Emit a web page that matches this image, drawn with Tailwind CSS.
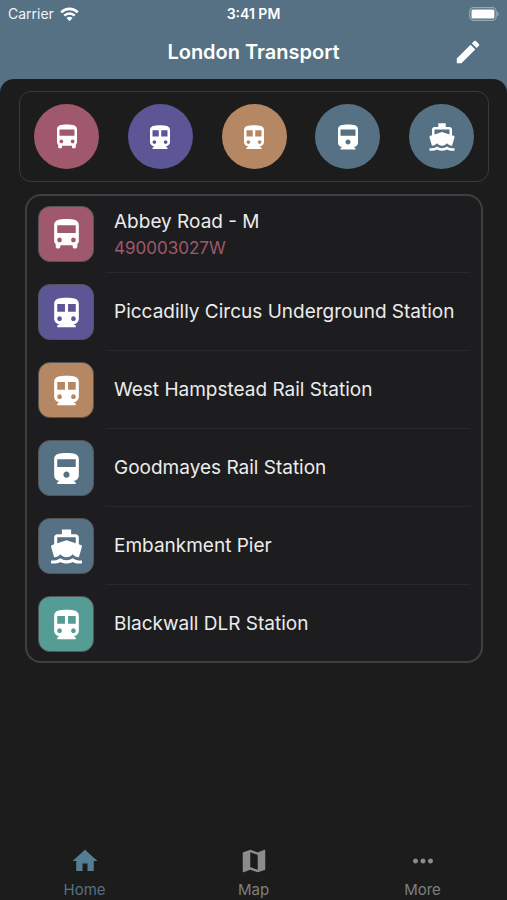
<!DOCTYPE html>
<html lang="en">
<head>
<meta charset="utf-8">
<meta name="viewport" content="width=device-width, initial-scale=1">
<title>London Transport</title>
<script src="https://cdn.jsdelivr.net/npm/@tailwindcss/browser@4"></script>
</head>
<body class="flex min-h-screen flex-col bg-[#557183] font-['Inter','Liberation_Sans',sans-serif] text-white">
<svg class="hidden" aria-hidden="true">
  <symbol id="bus" viewBox="0 0 24 24"><path d="M4 16c0 .88.39 1.67 1 2.22V20c0 .55.45 1 1 1h1c.55 0 1-.45 1-1v-1h8v1c0 .55.45 1 1 1h1c.55 0 1-.45 1-1v-1.78c.61-.55 1-1.34 1-2.22V6c0-3.5-3.58-4-8-4s-8 .5-8 4v10zm3.5 1c-.83 0-1.5-.67-1.5-1.5S6.67 14 7.5 14s1.5.67 1.5 1.5S8.33 17 7.5 17zm9 0c-.83 0-1.5-.67-1.5-1.5s.67-1.5 1.5-1.5 1.5.67 1.5 1.5-.67 1.5-1.5 1.5zm1.5-6H6V6h12v5z"/></symbol>
  <symbol id="subway" viewBox="0 -0.5 24 24"><path d="M12 2c-4.420 0-8 .5-8 4v9.500C4 17.430 5.570 19 7.500 19L6 20v1h12v-1L16.500 19c1.930 0 3.500-1.570 3.500-3.500V6c0-3.500-3.580-4-8-4zM7.500 17c-.83 0-1.500-.67-1.500-1.500S6.670 14 7.500 14s1.500.67 1.500 1.500S8.330 17 7.500 17zm3.500-6H6V6h5v5zm5.500 6c-.83 0-1.500-.67-1.500-1.500s.67-1.500 1.500-1.500 1.500.67 1.500 1.500-.67 1.500-1.500 1.500zm1.500-6h-5V6h5v5z"/></symbol>
  <symbol id="rail" viewBox="0 -1 24 24"><path d="M4 15.500C4 17.430 5.570 19 7.500 19L6 20v1h12v-1L16.500 19c1.930 0 3.500-1.570 3.500-3.500V5c0-3.500-3.580-4-8-4s-8 .5-8 4v10.500zm8 1.500c-1.100 0-2-.9-2-2s.9-2 2-2 2 .9 2 2-.9 2-2 2zm6-7H6V5h12v5z"/></symbol>
  <symbol id="boat" viewBox="0 0 24 24"><path d="M20 21c-1.390 0-2.780-.47-4-1.320-2.440 1.710-5.560 1.710-8 0C6.780 20.530 5.390 21 4 21H2v2h2c1.380 0 2.740-.35 4-.99 2.520 1.290 5.480 1.290 8 0 1.260.65 2.620.99 4 .99h2v-2h-2zM3.950 19H4c1.600 0 3.020-.88 4-2 .98 1.120 2.400 2 4 2s3.020-.88 4-2c.98 1.120 2.400 2 4 2h.05l1.890-6.680c.08-.26.06-.54-.06-.78s-.34-.42-.6-.5L20 10.620V6c0-1.100-.9-2-2-2h-3V1H9v3H6c-1.100 0-2 .9-2 2v4.620l-1.290.42c-.26.08-.48.26-.6.5s-.15.52-.06.78L3.950 19zM6 6h12v3.970L12 8 6 9.970V6z"/></symbol>
</svg>

<header>
  <div class="grid h-7 grid-cols-3 items-center px-2">
    <div class="flex items-center gap-1.5">
      <span class="text-sm text-slate-100">Carrier</span>
      <svg class="h-[15px] w-[19px]" viewBox="0 0 19 15" fill="none" stroke="#fff" stroke-width="2.600" role="img" aria-label="Wi-Fi"><path d="M1.200 5.300a11.800 11.800 0 0 1 16.600 0M4.300 8.600a7.400 7.400 0 0 1 10.400 0"/><path d="M9.500 14.200l-3-3.100a4.300 4.300 0 0 1 6 0z" fill="#fff" stroke="none"/></svg>
    </div>
    <time class="text-center text-sm font-semibold">3:41 PM</time>
    <svg class="h-[14px] w-[30px] justify-self-end" viewBox="0 0 30 14" role="img" aria-label="Battery full"><rect x=".7" y=".7" width="26.500" height="12.600" rx="3.800" fill="none" stroke="#fff" stroke-opacity=".4" stroke-width="1.200"/><rect x="2.500" y="2.400" width="22.900" height="9.200" rx="1.600" fill="#fff"/><path d="M28.300 4.800c1.800.7 1.800 3.700 0 4.400z" fill="#fff" fill-opacity=".45"/></svg>
  </div>
  <div class="grid h-[51px] grid-cols-[1fr_auto_1fr] items-center px-6 pb-[3px]">
    <h1 class="col-start-2 text-xl font-semibold">London Transport</h1>
    <button type="button" aria-label="Edit" class="justify-self-end">
      <svg class="size-[30px]" viewBox="0 0 24 24" fill="currentColor"><path d="M3 17.250V21h3.750L17.810 9.940l-3.750-3.750L3 17.250zM20.710 7.040c.39-.39.39-1.020 0-1.410l-2.340-2.340c-.39-.39-1.020-.39-1.410 0l-1.830 1.830 3.750 3.750 1.830-1.830z"/></svg>
    </button>
  </div>
</header>

<div class="flex grow flex-col rounded-t-[14px] bg-[#1c1c1c]">
  <main class="grow pl-[19px] pr-[18px] pt-3">
    <div class="flex h-[91px] items-center justify-between rounded-xl border border-[#3a3a3a] px-3.5">
      <button type="button" aria-label="Bus" class="grid size-[65px] place-items-center rounded-full bg-[#a0586c]"><svg class="size-[30px] fill-white"><use href="#bus"/></svg></button>
      <button type="button" aria-label="Underground" class="grid size-[65px] place-items-center rounded-full bg-[#5c5596]"><svg class="size-[30px] fill-white"><use href="#subway"/></svg></button>
      <button type="button" aria-label="Overground" class="grid size-[65px] place-items-center rounded-full bg-[#b58863]"><svg class="size-[30px] fill-white"><use href="#subway"/></svg></button>
      <button type="button" aria-label="Rail" class="grid size-[65px] place-items-center rounded-full bg-[#557183]"><svg class="size-[30px] fill-white"><use href="#rail"/></svg></button>
      <button type="button" aria-label="River" class="grid size-[65px] place-items-center rounded-full bg-[#557183]"><svg class="size-[30px] fill-white"><use href="#boat"/></svg></button>
    </div>

    <ul class="mx-1.5 mt-3 rounded-2xl bg-[#1d1d1f] pl-[13px] pr-[13px] pt-px text-[19px] text-[#ececec] outline-2 -outline-offset-2 outline-[#404040]">
      <li><a href="#" class="flex h-[78px] items-center gap-3"><span class="grid size-14 place-items-center rounded-xl border border-[#555] bg-[#a0586c]"><svg class="size-[37px] fill-white"><use href="#bus"/></svg></span><span class="flex h-full grow flex-col justify-center border-b border-[#29292b] pl-2 leading-7">Abbey Road - M<span class="text-[17px] leading-6 text-[#a0586c]">490003027W</span></span></a></li>
      <li><a href="#" class="flex h-[78px] items-center gap-3"><span class="grid size-14 place-items-center rounded-xl border border-[#555] bg-[#5c5596]"><svg class="size-[37px] fill-white"><use href="#subway"/></svg></span><span class="flex h-full grow flex-col justify-center border-b border-[#29292b] pl-2 leading-7">Piccadilly Circus Underground Station</span></a></li>
      <li><a href="#" class="flex h-[78px] items-center gap-3"><span class="grid size-14 place-items-center rounded-xl border border-[#555] bg-[#b58863]"><svg class="size-[37px] fill-white"><use href="#subway"/></svg></span><span class="flex h-full grow flex-col justify-center border-b border-[#29292b] pl-2 leading-7">West Hampstead Rail Station</span></a></li>
      <li><a href="#" class="flex h-[78px] items-center gap-3"><span class="grid size-14 place-items-center rounded-xl border border-[#555] bg-[#557183]"><svg class="size-[37px] fill-white"><use href="#rail"/></svg></span><span class="flex h-full grow flex-col justify-center border-b border-[#29292b] pl-2 leading-7">Goodmayes Rail Station</span></a></li>
      <li><a href="#" class="flex h-[78px] items-center gap-3"><span class="grid size-14 place-items-center rounded-xl border border-[#555] bg-[#557183]"><svg class="size-[37px] fill-white"><use href="#boat"/></svg></span><span class="flex h-full grow flex-col justify-center border-b border-[#29292b] pl-2 leading-7">Embankment Pier</span></a></li>
      <li><a href="#" class="flex h-[78px] items-center gap-3"><span class="grid size-14 place-items-center rounded-xl border border-[#555] bg-[#559c94]"><svg class="size-[37px] fill-white"><use href="#subway"/></svg></span><span class="flex h-full grow flex-col justify-center pl-2 leading-7">Blackwall DLR Station</span></a></li>
    </ul>
  </main>

  <nav class="grid grid-cols-3 text-[15px] leading-5 text-[#7f7f7f]">
    <a href="#" aria-current="page" class="flex flex-col items-center gap-1 text-[#557183]"><svg class="size-[30px] fill-[#557d92]" viewBox="0 0 24 24"><path d="M10 20v-6h4v6h5v-8h3L12 3 2 12h3v8z"/></svg>Home</a>
    <a href="#" class="flex flex-col items-center gap-1"><svg class="size-[30px] fill-[#8c8c8c]" viewBox="0 0 24 24"><path d="M20.500 3l-.16.03L15 5.100 9 3 3.360 4.900c-.21.07-.36.25-.36.48V20.500c0 .28.22.5.5.5l.16-.03L9 18.900l6 2.100 5.640-1.900c.21-.07.36-.25.36-.48V3.500c0-.28-.22-.5-.5-.5zM15 19l-6-2.110V5l6 2.110V19z"/></svg>Map</a>
    <a href="#" class="flex flex-col items-center gap-1"><svg class="size-[30px] fill-[#8c8c8c]" viewBox="0 0 24 24"><path d="M6 10c-1.100 0-2 .9-2 2s.9 2 2 2 2-.9 2-2-.9-2-2-2zm12 0c-1.100 0-2 .9-2 2s.9 2 2 2 2-.9 2-2-.9-2-2-2zm-6 0c-1.100 0-2 .9-2 2s.9 2 2 2 2-.9 2-2-.9-2-2-2z"/></svg>More</a>
  </nav>
</div>
</body>
</html>
